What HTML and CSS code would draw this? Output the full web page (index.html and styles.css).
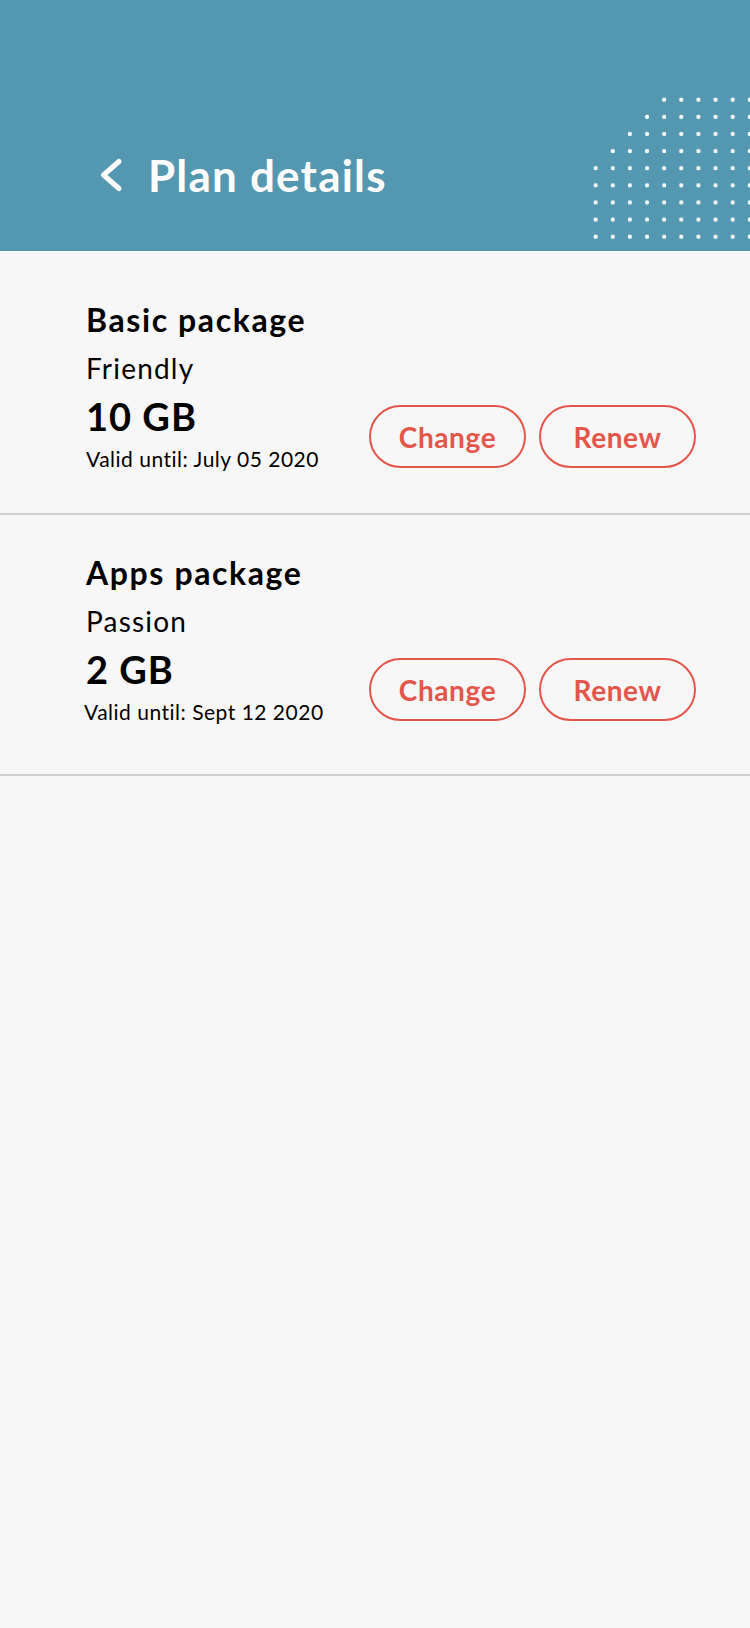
FILE: index.html
```html
<!DOCTYPE html>
<html lang="en">
<head>
<meta charset="utf-8">
<title>Plan details</title>
<link rel="stylesheet" href="styles.css">
</head>
<body>
<header class="header">
  <div class="header-row">
    <svg class="back" width="26" height="36" viewBox="0 0 26 36" aria-hidden="true">
      <polyline points="21,4.5 5.5,18 21,31.5" fill="none" stroke="#fff" stroke-width="5" stroke-linecap="round" stroke-linejoin="round"/>
    </svg>
    <h1 class="page-title">Plan details</h1>
  </div>
  <svg class="dots" width="170" height="171" viewBox="0 0 170 171" aria-hidden="true">
    <defs>
      <pattern id="dot" patternUnits="userSpaceOnUse" x="7.1" y="11.14" width="17.125" height="17.125">
        <circle cx="8.5625" cy="8.5625" r="2.1" fill="#fff"/>
      </pattern>
    </defs>
    <polygon fill="url(#dot)" points="75.6,11.14 170,11.14 170,171 7.1,171 7.1,79.6 24.2,79.6 24.2,62.5 41.35,62.5 41.35,45.4 58.5,45.4 58.5,28.27 75.6,28.27"/>
  </svg>
</header>

<main>
  <section class="card card-first">
    <div class="info">
      <h2 class="title">Basic package</h2>
      <p class="name">Friendly</p>
      <p class="amount">10 GB</p>
      <p class="valid">Valid until: July 05 2020</p>
    </div>
    <div class="actions">
      <button class="btn">Change</button>
      <button class="btn">Renew</button>
    </div>
  </section>
  <section class="card card-second">
    <div class="info">
      <h2 class="title">Apps package</h2>
      <p class="name">Passion</p>
      <p class="amount">2 GB</p>
      <p class="valid valid-shift">Valid until: Sept 12 2020</p>
    </div>
    <div class="actions">
      <button class="btn">Change</button>
      <button class="btn">Renew</button>
    </div>
  </section>
</main>
</body>
</html>
```

FILE: styles.css
```css
* { box-sizing: border-box; }

html, body {
  margin: 0;
  padding: 0;
  background: #f7f7f7;
  font-family: "Lato", "Liberation Sans", sans-serif;
  color: #000;
}

.header {
  position: relative;
  height: 251px;
  background: #5398b0;
  padding: 149px 0 0 98px;
  overflow: hidden;
}

.header-row {
  display: flex;
  align-items: center;
  gap: 24px;
}

.back { display: block; flex: none; }

.page-title {
  margin: 0;
  font-family: "Lato", "Open Sans", sans-serif;
  font-weight: 700;
  font-size: 44px;
  line-height: 52px;
  color: #fff;
  letter-spacing: 1.2px;
}

.dots {
  position: absolute;
  right: 0;
  bottom: 0;
  display: block;
}

.card {
  display: flex;
  justify-content: space-between;
  align-items: flex-end;
  padding-left: 86px;
  padding-right: 54px;
  border-bottom: 2px solid #d0d0d0;
}

.card-first { padding-top: 50px; padding-bottom: 42px; }
.card-second { padding-top: 39px; padding-bottom: 50px; }

.info { display: flex; flex-direction: column; }

.title {
  margin: 0;
  font-size: 32px;
  line-height: 38px;
  font-weight: 700;
  letter-spacing: 1.6px;
}

.name {
  margin: 13px 0 0;
  font-size: 28px;
  line-height: 32px;
  font-weight: 400;
  letter-spacing: 1.2px;
}

.amount {
  margin: 10px 0 0;
  font-size: 38px;
  line-height: 44px;
  font-weight: 700;
  letter-spacing: 1px;
}

.valid {
  margin: 9px 0 0;
  font-size: 21px;
  line-height: 24px;
  font-weight: 400;
  letter-spacing: 0.5px;
}

.valid-shift { margin-left: -2px; }

.actions {
  display: flex;
  gap: 13px;
  margin-bottom: 3px;
}

.btn {
  width: 157px;
  height: 63px;
  border: 2px solid #e3564b;
  border-radius: 32px;
  background: transparent;
  color: #e3564b;
  font-family: "Lato", sans-serif;
  font-weight: 700;
  font-size: 28px;
  line-height: 1;
  letter-spacing: 0.6px;
  padding: 0;
}
```
